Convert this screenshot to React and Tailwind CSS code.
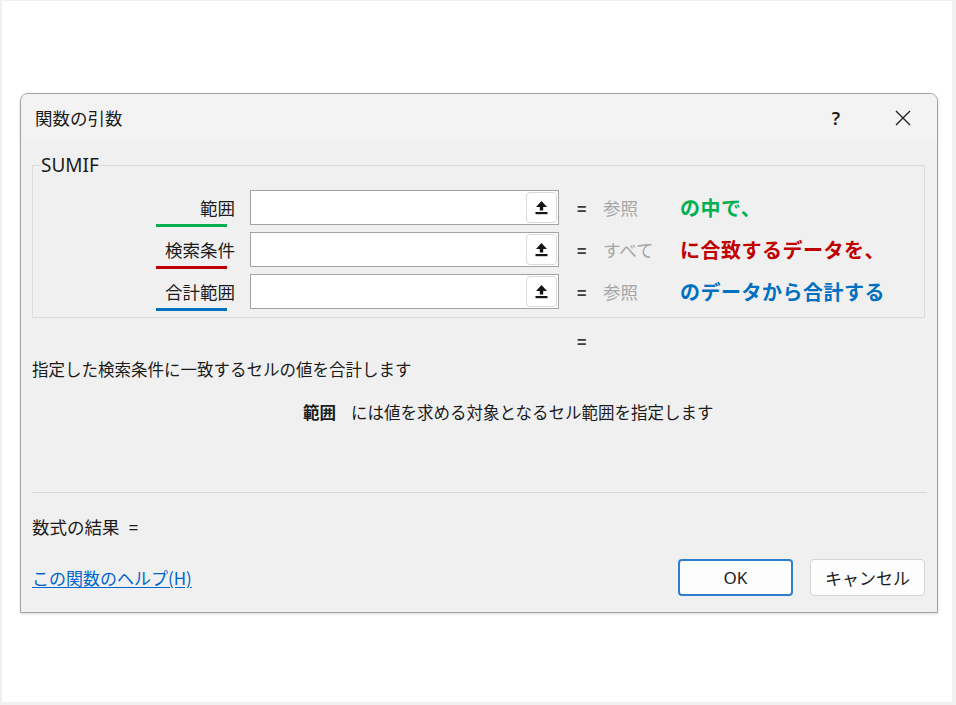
import React from "react";

const rows = [
  {
    label: "範囲",
    value: "参照",
    note: "の中で、",
    line: "bg-[#00b050]",
    noteColor: "text-[#00b050]",
  },
  {
    label: "検索条件",
    value: "すべて",
    note: "に合致するデータを、",
    line: "bg-[#c00000]",
    noteColor: "text-[#c00000]",
  },
  {
    label: "合計範囲",
    value: "参照",
    note: "のデータから合計する",
    line: "bg-[#0070c0]",
    noteColor: "text-[#0070c0]",
  },
];

// collapse-dialog arrow inside each ref box
function RefArrow() {
  return (
    <svg width="13" height="15" viewBox="0 0 13 15">
      <path d="M6.5 1 L12 7 H8.2 V10.5 H4.8 V7 H1 Z" fill="#151515" />
      <rect x="0.5" y="12" width="12" height="2.2" fill="#151515" />
    </svg>
  );
}

function ArgRow({ row }) {
  return (
    <div className="flex items-center h-[35px]">
      {/* label + coloured marker underneath */}
      <div className="relative w-[194px] h-full flex items-center justify-end text-[17.5px] leading-[20px] text-[#1b1b1b]">
        {row.label}
        <span
          className={`absolute left-[115px] bottom-[-2px] w-[71px] h-[3px] ${row.line}`}
        />
      </div>
      <div className="ml-[15px] w-[309px] h-full bg-white border border-[#a3a3a3] flex items-center justify-end pr-[1px]">
        <button className="w-[31px] h-[31px] rounded-[4px] border border-[#dadada] bg-white flex items-center justify-center">
          <RefArrow />
        </button>
      </div>
      <span className="ml-[18px] w-[10px] text-[16px] leading-[20px] font-bold text-[#3a3a3a]">
        =
      </span>
      <span className="ml-[16px] w-[77px] text-[17.5px] leading-[20px] text-[#a6a6a6]">
        {row.value}
      </span>
      <span
        className={`text-[20px] leading-[24px] font-bold tracking-[0.5px] ${row.noteColor}`}
      >
        {row.note}
      </span>
    </div>
  );
}

export default function App() {
  return (
    <div className="w-[956px] h-[705px] bg-[#f0f0f0] pl-[2px] pt-[1px] font-['Noto_Sans_CJK_JP','Noto_Sans',sans-serif]">
      <div className="w-[950px] h-[701px] bg-white pl-[18px] pt-[92px]">
        {/* DIALOG */}
        <div className="w-[918px] h-[520px] flex flex-col border border-[#a2a2a2] rounded-t-[8px] overflow-hidden bg-[#f0f0f0] shadow-[0_1px_3px_rgba(0,0,0,0.15)]">
          {/* title bar */}
          <div className="h-[47px] bg-[#f3f3f3] flex items-center pl-[14px] pr-[26px]">
            <span className="text-[17.5px] leading-[20px] text-[#1b1b1b]">
              関数の引数
            </span>
            <span className="ml-auto text-[18px] leading-[20px] font-semibold text-[#1b1b1b] font-['Noto_Sans',sans-serif]">
              ?
            </span>
            <svg
              className="ml-[55px]"
              width="16"
              height="16"
              viewBox="0 0 16 16"
            >
              <path
                d="M1 1 L15 15 M15 1 L1 15"
                stroke="#1b1b1b"
                strokeWidth="1.3"
              />
            </svg>
          </div>

          {/* body */}
          <div className="flex-1 flex flex-col pl-[11px] pr-[10px]">
            <fieldset className="mt-[14px] mr-[2px] border border-[#dcdcdc] px-2 pb-[8px]">
              <legend className="text-[19px] leading-[20px] text-[#1b1b1b] font-['Noto_Sans',sans-serif]">
                SUMIF
              </legend>
              <div className="pt-[15px] flex flex-col gap-[7px]">
                {rows.map((row) => (
                  <ArgRow key={row.label} row={row} />
                ))}
              </div>
            </fieldset>

            <div className="mt-[13px] pl-[545px] h-[20px] text-[16px] leading-[20px] font-bold text-[#3a3a3a]">
              =
            </div>

            <p className="mt-[8px] text-[16.5px] leading-[20px] text-[#1b1b1b]">
              指定した検索条件に一致するセルの値を合計します
            </p>

            <p className="mt-[23px] pl-[271px] text-[16.5px] leading-[20px] text-[#1b1b1b] flex">
              <span className="font-bold">範囲</span>
              <span className="ml-[15px]">
                には値を求める対象となるセル範囲を指定します
              </span>
            </p>

            <div className="mt-[70px] h-px bg-[#d9d9d9]" />

            <p className="mt-[24px] text-[17.5px] leading-[20px] text-[#1b1b1b] flex">
              <span>数式の結果</span>
              <span className="ml-[9px] font-['Noto_Sans',sans-serif]">=</span>
            </p>

            <div className="mt-[22px] flex items-center">
              <a
                href="#"
                className="text-[17px] leading-[20px] text-[#0066cc] underline underline-offset-2"
              >
                この関数のヘルプ(H)
              </a>
              <button className="ml-auto w-[115px] h-[37px] rounded-[4px] border-2 border-[#2f7fd0] bg-[#fdfdfd] text-[17px] text-[#1b1b1b] font-['Noto_Sans',sans-serif]">
                OK
              </button>
              <button className="ml-[17px] mr-[2px] w-[115px] h-[37px] rounded-[4px] border border-[#d3d3d3] bg-[#fdfdfd] text-[17px] text-[#1b1b1b]">
                キャンセル
              </button>
            </div>
          </div>
        </div>
      </div>
    </div>
  );
}
